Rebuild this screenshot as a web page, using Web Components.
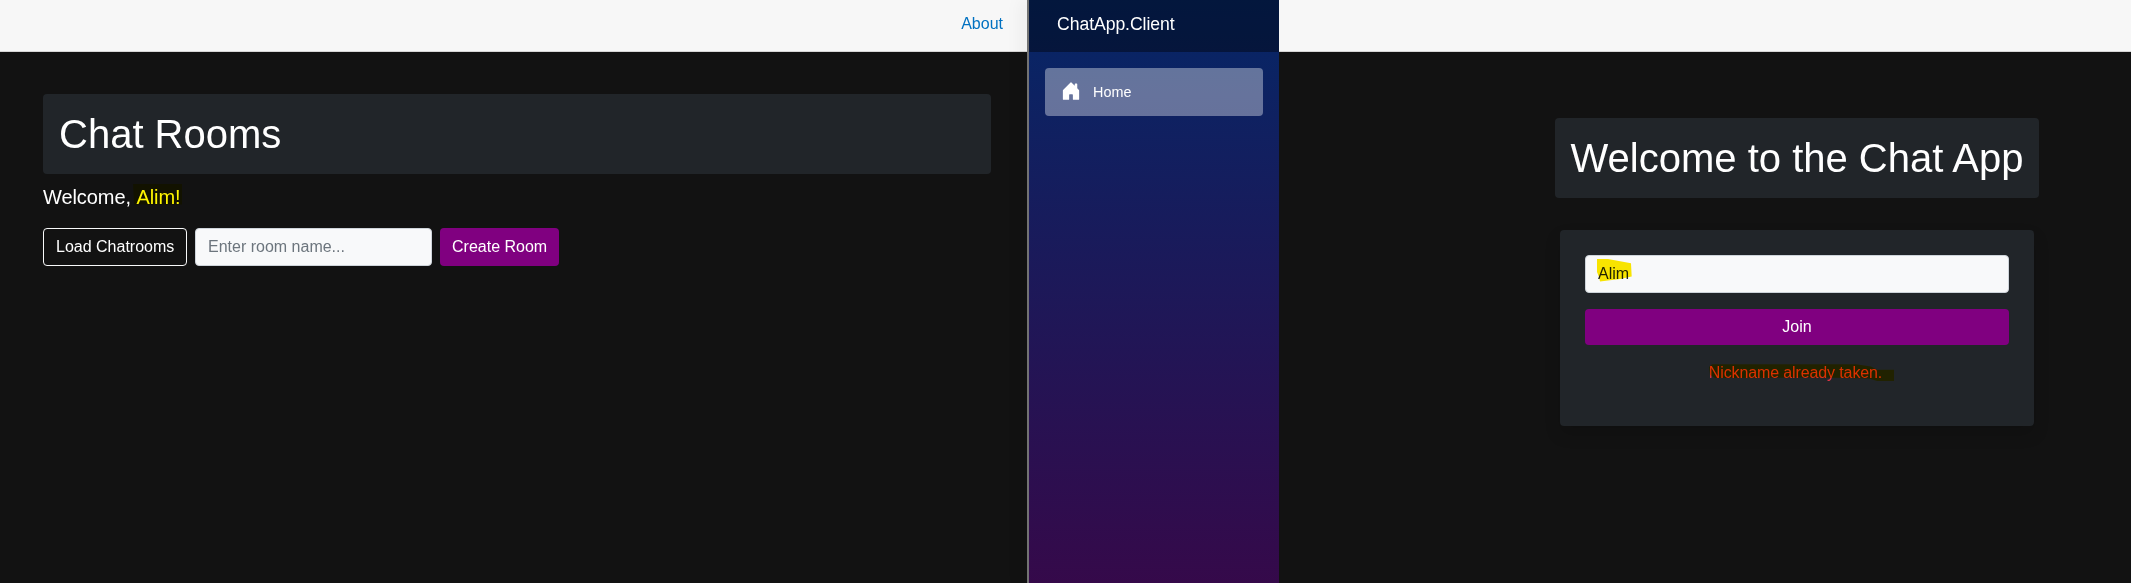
<!DOCTYPE html>
<html lang="en">
<head>
<meta charset="utf-8">
<title>ChatApp.Client</title>
<style>
html,body{margin:0;height:100%;overflow:hidden;background:#121212}
body{font:16px/1.5 "Liberation Sans",Arial,sans-serif;color:#fff}
</style>
</head>
<body>
<chat-app></chat-app>
<script>
const define = (name, html) => customElements.define(name, class extends HTMLElement {
  constructor() {
    super();
    const t = document.createElement('template');
    t.innerHTML = html;
    this.attachShadow({mode: 'open'}).append(t.content.cloneNode(true));
  }
});

define('top-row', `<style>
:host{display:flex;justify-content:flex-end;align-items:flex-start;box-sizing:border-box;height:52px;padding:12px 24px 0;background:#f7f7f7;border-bottom:1px solid #d6d5d5;color:#0071c1}
</style><slot></slot>`);

define('page-title', `<style>
:host{display:block}
h1{margin:0;padding:16px;font-size:40px;line-height:48px;font-weight:400;background:#212529;border-radius:4px;white-space:nowrap}
</style><h1><slot></slot></h1>`);

define('app-button', `<style>
:host{display:block}
button{display:block;box-sizing:border-box;width:100%;height:100%;margin:0;padding:0 12px;font:inherit;line-height:24px;color:#fff;background:#800080;border:0;border-radius:4px;white-space:nowrap}
:host([outline]) button{background:transparent;border:1px solid #f8f9fa}
</style><button><slot></slot></button>`);

define('text-field', `<style>
:host{display:block;box-sizing:border-box;height:38px;padding:6px 12px;background:#f8f9fa;border:1px solid #ced4da;border-radius:4px;color:#212529}
:host([placeholder]){color:#6c757d}
</style><slot></slot>`);

define('marker-ink', `<style>
:host{position:relative;display:inline-block}
svg{position:absolute;left:0;top:0;overflow:visible;width:1px;height:1px;mix-blend-mode:multiply;pointer-events:none}
path{fill:#ffea00;display:none}
.name{fill:#fff600}
:host([shape=name]) .name,:host([shape=field]) .field,:host([shape=error]) .error{display:block}
</style><slot></slot><svg>
<path class="name" d="M-3 2H46V22.500H-2Z"/>
<path class="field" d="M-1 -3H10L33 1.300L33.700 14.500L22 17L2 19.500L1 15L-1 10Z"/>
<path class="error" d="M0 6L3 3.300H147L162 5.500L168 8.700H185V20H168L160 17.500L110 16.500L6 17L1 14Z"/>
</svg>`);

define('nav-item', `<style>
:host{display:flex;align-items:center;box-sizing:border-box;height:48px;padding:0 16px;gap:12px;font-size:14.4px;border-radius:4px;background:rgba(255,255,255,.37)}
svg{width:20px;height:20px;margin-bottom:2px}
span{margin-top:2px}
</style><svg viewBox="0 0 16 16" fill="#fff"><path d="M6.500 14.500v-3.505c0-.245.25-.495.5-.495h2c.25 0 .5.25.5.5v3.500a.5.5 0 0 0 .5.5h4a.5.5 0 0 0 .5-.5v-7a.5.5 0 0 0-.146-.354L13 5.793V2.500a.5.5 0 0 0-.5-.5h-1a.5.5 0 0 0-.5.5v1.293L8.354 1.146a.5.5 0 0 0-.708 0l-6 6A.5.5 0 0 0 1.500 7.500v7a.5.5 0 0 0 .5.5h4a.5.5 0 0 0 .5-.5Z"/></svg><span><slot></slot></span>`);

define('side-bar', `<style>
:host{display:block;background:linear-gradient(180deg,#052767 -4px,#3a0647 645px)}
header{box-sizing:border-box;height:52px;padding:11px 28px 0;font-size:17.6px;letter-spacing:-.05px;background:rgba(0,0,0,.4)}
nav{padding:16px}
</style><header>ChatApp.Client</header><nav><nav-item>Home</nav-item></nav>`);

define('rooms-view', `<style>
:host{display:block}
main{padding:42px 36px 0 43px}
p{margin:8px 0 16px;font-size:20px;line-height:30px;letter-spacing:-.08px}
.row{display:grid;grid-template-columns:144px 237px 119px;gap:8px;height:38px}
</style><top-row>About</top-row><main><page-title>Chat Rooms</page-title>
<p>Welcome, <marker-ink shape="name">Alim!</marker-ink></p>
<div class="row"><app-button outline>Load Chatrooms</app-button><text-field placeholder>Enter room name...</text-field><app-button>Create Room</app-button></div></main>`);

define('join-view', `<style>
:host{display:block}
main{display:flex;flex-direction:column;align-items:center;gap:32px;padding:66px 0 0 184px}
section{box-sizing:border-box;width:474px;height:196px;padding:25px;background:#212529;border-radius:4px;box-shadow:0 8px 16px rgba(0,0,0,.15)}
app-button{height:36px;margin:16px 0}
p{margin:0 3px 0 0;text-align:center;color:#dc3545;letter-spacing:-.12px}
</style><top-row></top-row><main><page-title>Welcome to the Chat App</page-title>
<section><text-field><marker-ink shape="field">Alim</marker-ink></text-field><app-button>Join</app-button>
<p><marker-ink shape="error">Nickname already taken.</marker-ink></p></section></main>`);

define('chat-app', `<style>
:host{display:grid;grid-template-columns:1027px 2px 250px 1fr;height:583px}
.edge{background:#737373;box-shadow:-2px 0 16px rgba(0,0,0,.25)}
</style><rooms-view></rooms-view><div class="edge"></div><side-bar></side-bar><join-view></join-view>`);
</script>
</body>
</html>
